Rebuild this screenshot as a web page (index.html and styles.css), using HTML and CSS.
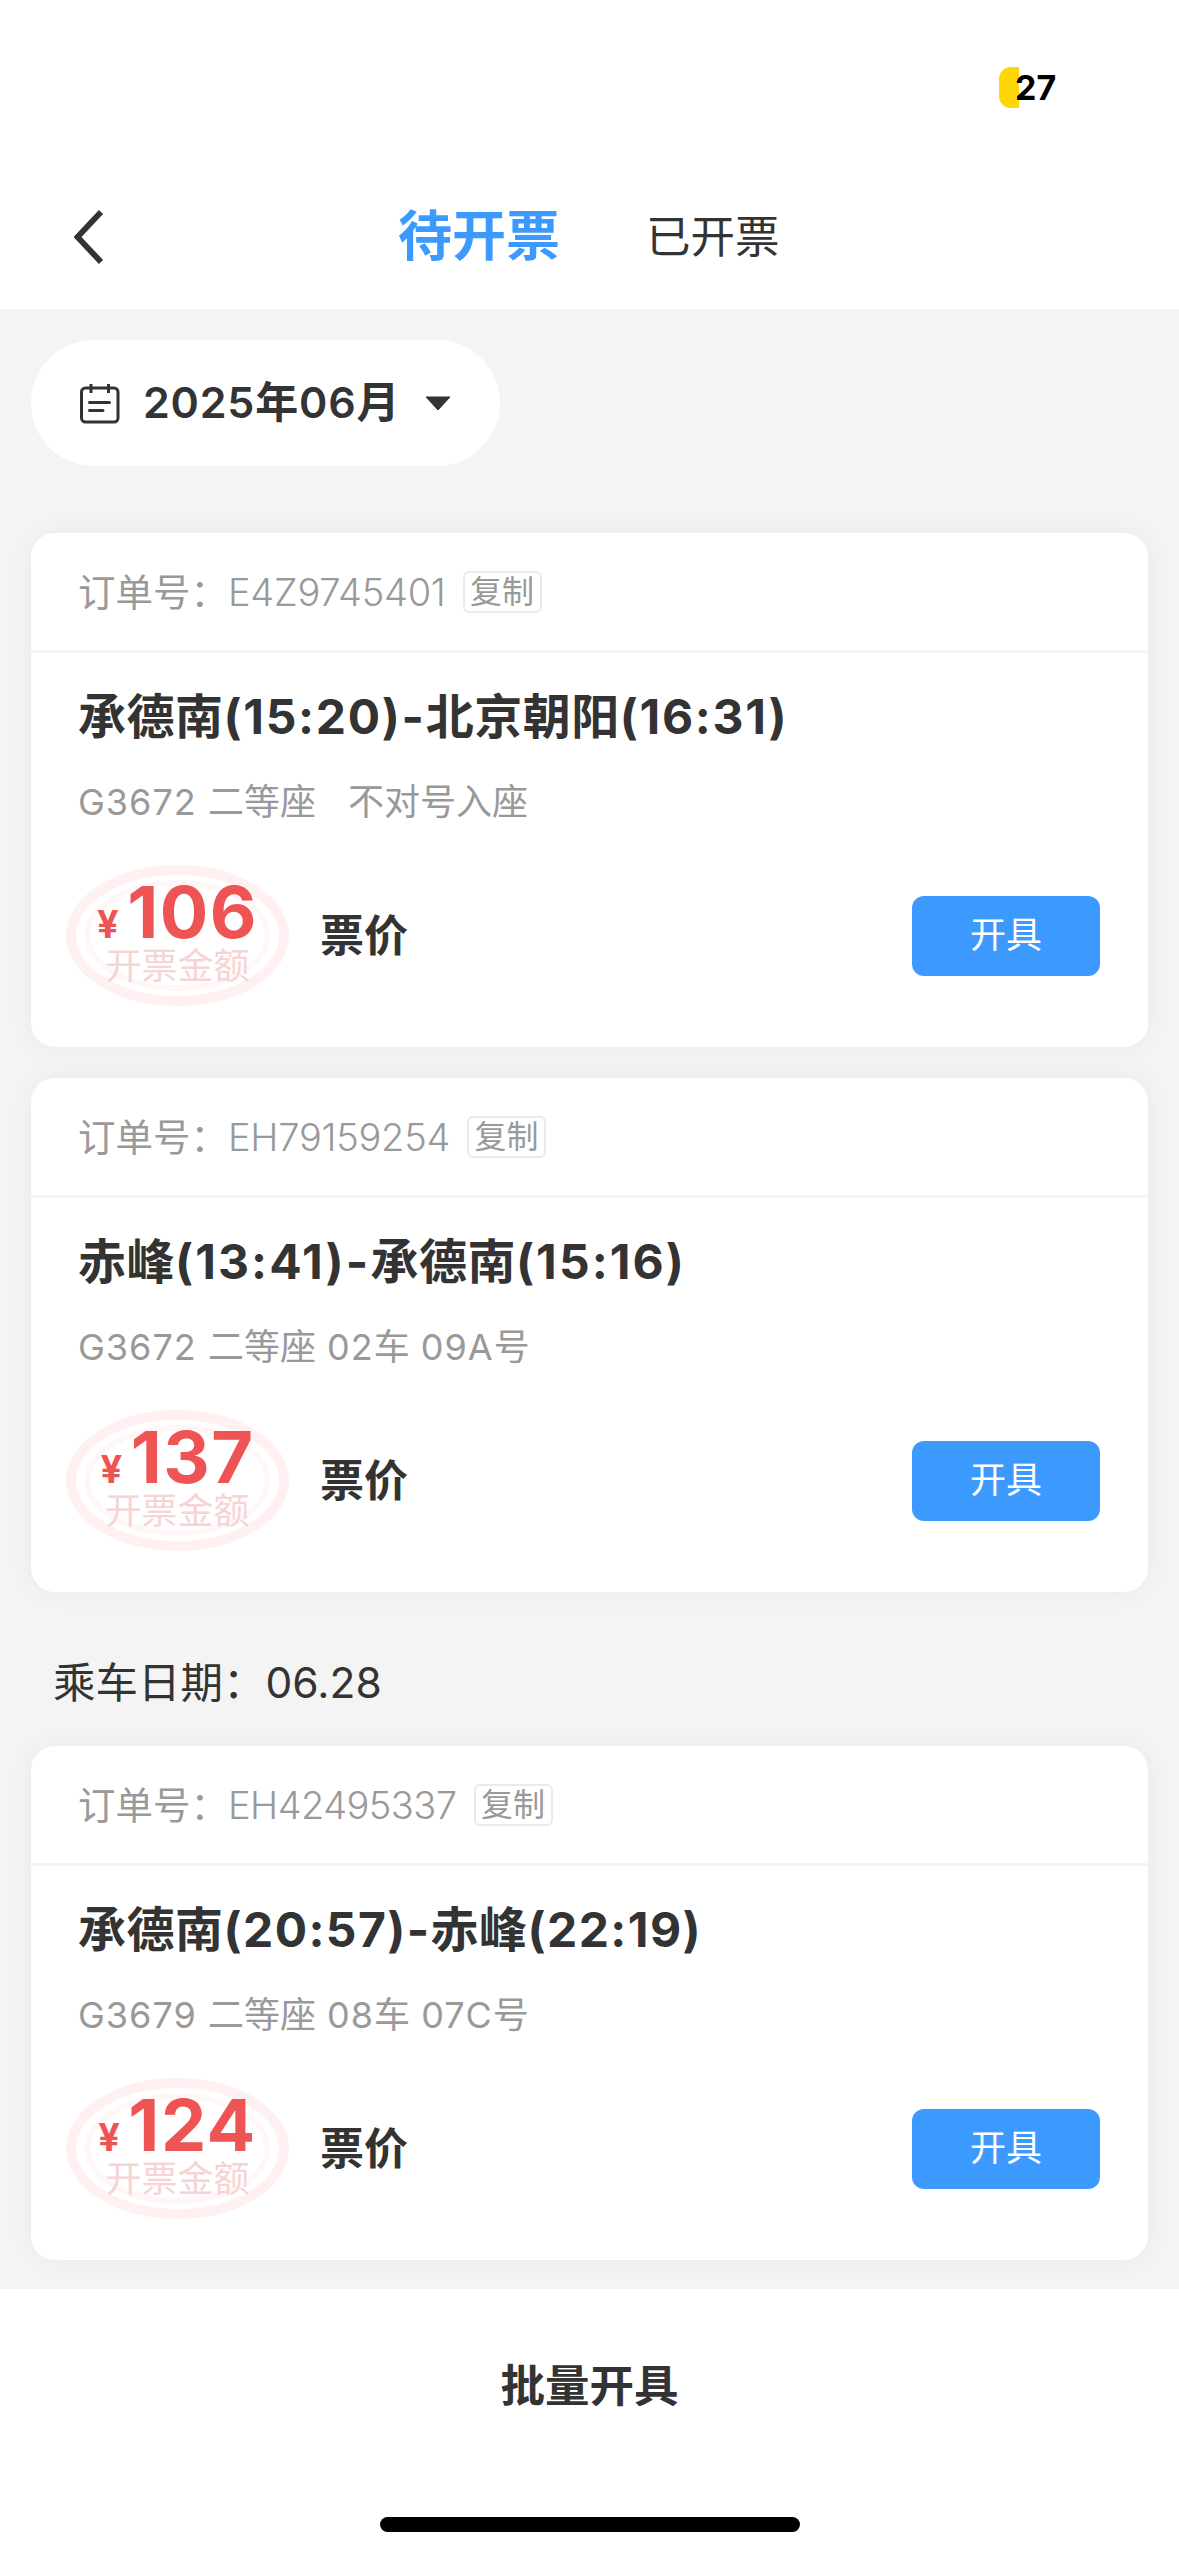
FILE: index.html
```html
<!DOCTYPE html>
<html lang="zh-CN">
<head>
<meta charset="utf-8">
<title>待开票</title>
<link rel="stylesheet" href="styles.css">
</head>
<body>
<svg class="defs" width="0" height="0" aria-hidden="true">
  <symbol id="seal" viewBox="0 0 223 141">
    <ellipse cx="111.5" cy="70.5" rx="106.5" ry="65.5" fill="none" stroke="#fff0f1" stroke-width="10"/>
    <ellipse cx="111.5" cy="70.5" rx="90" ry="52.5" fill="none" stroke="#fff6f7" stroke-width="6"/>
  </symbol>
</svg>
<div class="screen">
  <header class="header">
    <div class="status"><span class="battery"></span><span class="level">27</span></div>
    <nav class="nav">
      <svg class="back" width="30" height="54" viewBox="0 0 30 54"><path d="M27 2 L3.5 27 L27 52" fill="none" stroke="#333" stroke-width="5.8"/></svg>
      <span class="tab active">待开票</span>
      <span class="tab idle">已开票</span>
    </nav>
  </header>
  <main class="content">
    <div class="month">
      <svg class="calendar" width="41" height="41" viewBox="0 0 41 41" fill="none" stroke="#333" stroke-width="3">
        <rect x="2.5" y="5" width="36.5" height="34" rx="4"/>
        <path d="M12 1 V10 M29.5 1 V10"/>
        <path d="M10.5 19.5 H30.5 M10.5 27.5 H24" stroke-linecap="round"/>
      </svg>
      <span class="month-text">2025年06月</span>
      <svg class="caret" width="26" height="15" viewBox="0 0 26 15"><path d="M1 1 H25 L13 14 Z" fill="#333" stroke="#333" stroke-linejoin="round"/></svg>
    </div>

    <section class="card">
      <div class="order"><span class="order-label">订单号：</span><span class="order-no">E4Z9745401</span><span class="copy">复制</span></div>
      <div class="body">
        <div class="route">承德南<span class="time">(15:20)-</span>北京朝阳<span class="time">(16:31)</span></div>
        <div class="detail"><span class="code">G3672 </span>二等座<span class="code"> </span><span class="noseat">不对号入座</span></div>
        <div class="pay">
          <div class="seal"><svg class="ring"><use href="#seal"/></svg><div class="amount"><span class="yen">¥</span>106</div><div class="caption">开票金额</div></div>
          <span class="kind">票价</span>
          <span class="button">开具</span>
        </div>
      </div>
    </section>

    <section class="card">
      <div class="order"><span class="order-label">订单号：</span><span class="order-no">EH79159254</span><span class="copy">复制</span></div>
      <div class="body">
        <div class="route">赤峰<span class="time wide">(13:41)-</span>承德南<span class="time wide">(15:16)</span></div>
        <div class="detail"><span class="code">G3672 </span>二等座<span class="code"> 02</span>车<span class="code"> 09A</span>号</div>
        <div class="pay">
          <div class="seal"><svg class="ring"><use href="#seal"/></svg><div class="amount"><span class="yen">¥</span>137</div><div class="caption">开票金额</div></div>
          <span class="kind">票价</span>
          <span class="button">开具</span>
        </div>
      </div>
    </section>

    <h2 class="date">乘车日期：<span class="day">06.28</span></h2>

    <section class="card">
      <div class="order"><span class="order-label">订单号：</span><span class="order-no tight">EH42495337</span><span class="copy">复制</span></div>
      <div class="body">
        <div class="route">承德南<span class="time narrow">(20:57)-</span>赤峰<span class="time narrow">(22:19)</span></div>
        <div class="detail"><span class="code">G3679 </span>二等座<span class="code"> 08</span>车<span class="code"> 07C</span>号</div>
        <div class="pay">
          <div class="seal"><svg class="ring"><use href="#seal"/></svg><div class="amount"><span class="yen">¥</span>124</div><div class="caption">开票金额</div></div>
          <span class="kind">票价</span>
          <span class="button">开具</span>
        </div>
      </div>
    </section>
  </main>
  <footer class="footer">
    <span class="batch">批量开具</span>
    <span class="home"></span>
  </footer>
</div>
</body>
</html>
```

FILE: styles.css
```css
* { box-sizing: border-box; }
body { margin: 0; color: #333; font-family: Inter, "Noto Sans CJK SC", sans-serif; }
.defs { position: absolute; }
.screen { width: 1179px; height: 2556px; display: flex; flex-direction: column; background: #f4f4f4; overflow: hidden; white-space: nowrap; }

.header { flex: none; height: 309px; background: #fff; }
.status { height: 175px; display: flex; padding: 67px 0 0 999px; }
.battery { width: 20px; height: 41px; border-radius: 12px 0 0 12px; background: #ffd60a; }
.level { margin-left: -4px; font-size: 34px; font-weight: 700; line-height: 41px; color: #000; }
.nav { height: 124px; display: flex; align-items: center; padding-left: 74px; }
.back { margin-right: 294px; }
.tab { display: block; }
.active { width: 162px; font-size: 54px; font-weight: 700; line-height: 60px; color: #3c9aff; }
.idle { margin-left: 86px; font-size: 44.5px; line-height: 60px; }

.content { flex: 1; min-height: 0; padding: 31px 31px 0; }
.month { width: 469px; height: 126px; border-radius: 63px; background: #fff; display: flex; align-items: center; padding-left: 48px; margin-bottom: 67px; }
.month-text { width: 255px; margin-left: 23px; padding-bottom: 2px; font-size: 43px; font-weight: 600; line-height: 60px; letter-spacing: .8px; }
.caret { margin-left: 27px; }

.card { height: 514px; border-radius: 24px; background: #fff; box-shadow: 0 0 28px rgba(0, 0, 0, .05); margin-bottom: 31px; }
.order { height: 120px; border-bottom: 3px solid #f4f4f4; display: flex; align-items: center; padding-left: 47px; font-size: 38px; font-weight: 300; color: #999; }
.order-label { width: 150px; font-size: 37.5px; font-weight: 400; padding-bottom: 4px; }
.order-no { letter-spacing: -.25px; }
.tight { letter-spacing: -.55px; }
.copy { margin-left: 17px; width: 79px; height: 42px; border: 2px solid #eaeaea; border-radius: 6px; font-size: 32px; font-weight: 400; line-height: 38px; text-align: center; }
.body { padding: 34px 48px 0; }
.route { margin-left: -1px; font-size: 48px; font-weight: 700; line-height: 60px; letter-spacing: .5px; }
.time { letter-spacing: 1.7px; }
.wide { letter-spacing: 2.1px; }
.narrow { letter-spacing: 1.4px; }
.detail { margin: 30px 0 0 -1px; font-size: 36px; font-weight: 400; line-height: 50px; color: #999; }
.code { letter-spacing: 1px; }
.noseat { margin-left: 21px; }
.pay { margin: 38px 0 0 -13px; display: flex; align-items: center; }
.seal { position: relative; width: 223px; height: 141px; padding-top: 12px; text-align: center; }
.ring { position: absolute; inset: 0; width: 223px; height: 141px; }
.amount { position: relative; height: 70px; font-size: 72px; font-weight: 700; line-height: 70px; letter-spacing: 1.5px; color: #ef5454; }
.yen { font-size: 38px; margin-right: 7px; }
.caption { position: relative; margin-top: 1px; font-size: 36px; font-weight: 400; line-height: 36px; color: #f6d4d4; }
.kind { margin-left: 31px; font-size: 44px; font-weight: 700; line-height: 60px; }
.button { margin-left: auto; width: 188px; height: 80px; border-radius: 12px; background: #3c9aff; color: #fff; font-size: 36px; line-height: 78px; text-align: center; }
.date { margin: 0; height: 123px; padding: 30px 0 0 22px; font-size: 42.5px; font-weight: 400; line-height: 60px; }

.footer { flex: none; height: 267px; background: #fff; display: flex; flex-direction: column; align-items: center; }
.batch { margin-top: 67px; font-size: 44.5px; font-weight: 700; line-height: 60px; }
.home { width: 420px; height: 15px; border-radius: 8px; background: #000; margin-top: 101px; }
```
